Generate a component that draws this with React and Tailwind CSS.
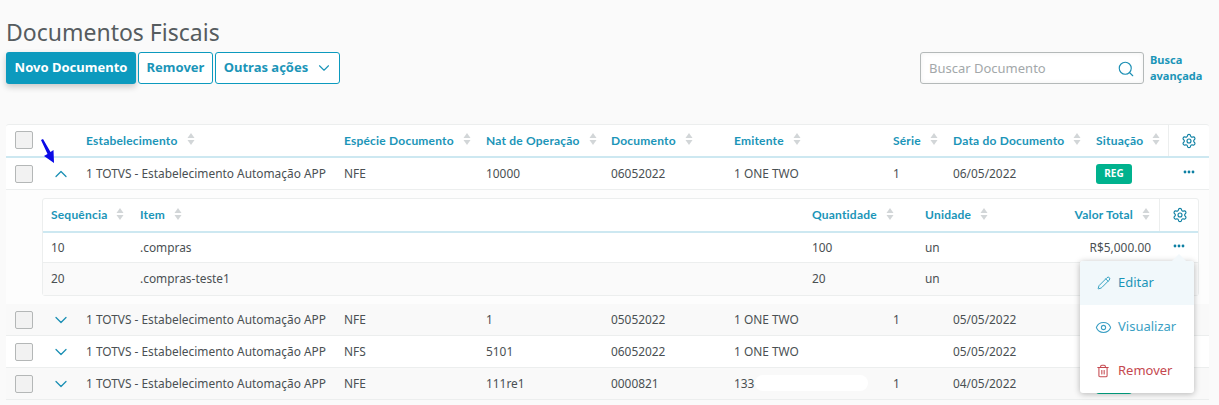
import { ChevronDown, ChevronUp, Eye, Pencil, Search, Settings, Trash2 } from 'lucide-react';

const COLS = 'grid grid-cols-[80px_258px_142px_125px_123px_159px_60px_143px_72px_41px] items-center';
const SUB_COLS = 'grid grid-cols-[88px_672px_113px_100px_143px_40px] items-center';

const ROWS = [
  { esp: 'NFE', nat: '1', doc: '05052022', emi: '1 ONE TWO', serie: '1', data: '05/05/2022', bg: 'bg-[#f9f9f9]' },
  { esp: 'NFS', nat: '5101', doc: '06052022', emi: '1 ONE TWO', serie: '', data: '05/05/2022', bg: 'bg-white' },
  { esp: 'NFE', nat: '111re1', doc: '0000821', emi: '133', serie: '1', data: '04/05/2022', bg: 'bg-[#f9f9f9]', blur: true },
];

function Sort() {
  return (
    <svg width="8" height="12" viewBox="0 0 8 12" className="mb-[3px] shrink-0 fill-[#d2d6d8]">
      <path d="M4 0 7.5 5H.5z" />
      <path d="M4 12 .5 7h7z" />
    </svg>
  );
}

function Head({ children, className = '' }) {
  return (
    <div className={`flex items-center gap-[9px] font-['Lato',sans-serif] text-[12px] font-bold tracking-[0.2px] text-[#1b95b8] ${className}`}>
      <span>{children}</span>
      <Sort />
    </div>
  );
}

function Check() {
  return <div className="h-[18px] w-[18px] rounded-[2px] border-[1.5px] border-[#b4b7b7] bg-[#f2f2f2]" />;
}

function Dots() {
  return (
    <svg width="12" height="4" viewBox="0 0 12 4" className="fill-[#0c7fa3]">
      <circle cx="2" cy="2" r="1.4" />
      <circle cx="6" cy="2" r="1.4" />
      <circle cx="10" cy="2" r="1.4" />
    </svg>
  );
}

function Badge({ children }) {
  return <span className="flex h-[20px] w-[36px] items-center justify-center rounded-[3px] bg-[#00b28e] text-[10px] font-bold text-white">{children}</span>;
}

function RowStart({ open }) {
  return (
    <div className="flex items-center pl-[9px]">
      <Check />
      <span className="ml-[18px] text-[#1b8fb4]">
        {open ? <ChevronUp size={20} strokeWidth={1.5} /> : <ChevronDown size={20} strokeWidth={1.5} />}
      </span>
    </div>
  );
}

export default function App() {
  return (
    <div className="relative h-[405px] w-[1219px] overflow-hidden bg-[#fafafa] font-['Noto_Sans',sans-serif] text-[11.9px] text-[#4a5053]">
      <div className="px-[6px] pt-[15px]">
        <h1 className="h-[37px] text-[23px] leading-[34px] text-[#565c5f]">Documentos Fiscais</h1>

        <div className="flex items-start">
          <button className="h-[32px] w-[130px] rounded-[3px] bg-[#0c9abe] text-[13px] font-bold text-white shadow-[0_3px_6px_rgba(0,0,0,0.2)]">Novo Documento</button>
          <button className="ml-[2px] h-[32px] w-[75px] rounded-[3px] border border-[#0c9abe] bg-white text-[13px] font-bold text-[#1b95b8]">Remover</button>
          <button className="ml-[2px] flex h-[32px] w-[125px] items-center justify-center gap-[7px] rounded-[3px] border border-[#0c9abe] bg-white pl-[2px] text-[13px] font-bold text-[#1b95b8]">
            Outras ações <ChevronDown size={18} strokeWidth={1.5} />
          </button>
          <div className="ml-[580px] flex h-[32px] w-[224px] items-center justify-between rounded-[3px] border border-[#b4b9b9] bg-white pl-[8px] pr-[8px] pt-[1px] text-[13px] text-[#a3a8aa] shadow-[inset_0_0_5px_rgba(0,0,0,0.06)]">
            Buscar Documento
            <Search size={18} strokeWidth={1.5} className="text-[#1b8fb4]" />
          </div>
          <div className="ml-[6px] text-[11px] font-bold leading-[16px] text-[#1b95b8]">Busca<br />avançada</div>
        </div>

        <div className="mt-[40px] w-[1203px] rounded-t-[3px] border-t border-[#eceeee] bg-white">
          <div className={`${COLS} h-[33px] border-b-2 border-[#cde8f1]`}>
            <div className="pb-[2px] pl-[9px]"><Check /></div>
            <Head>Estabelecimento</Head>
            <Head>Espécie Documento</Head>
            <Head>Nat de Operação</Head>
            <Head>Documento</Head>
            <Head>Emitente</Head>
            <Head>Série</Head>
            <Head>Data do Documento</Head>
            <Head>Situação</Head>
            <div className="flex h-full items-center justify-center border-l border-[#eceeee] text-[#0c7fa3]"><Settings size={16} strokeWidth={1.7} /></div>
          </div>

          <div className={`${COLS} h-[32px] border-b border-[#eceeee]`}>
            <RowStart open />
            <div>1 TOTVS - Estabelecimento Automação APP</div>
            <div>NFE</div>
            <div>10000</div>
            <div>06052022</div>
            <div>1 ONE TWO</div>
            <div>1</div>
            <div>06/05/2022</div>
            <div><Badge>REG</Badge></div>
            <div className="flex justify-center pb-[4px]"><Dots /></div>
          </div>

          <div className="h-[114px] bg-[#fdfdfd] pl-[36px] pt-[8px]">
            <div className="w-[1157px] rounded-[3px] border border-[#eceeee] bg-white">
              <div className={`${SUB_COLS} h-[34px] border-b-2 border-[#cde8f1]`}>
                <Head className="pl-[8px]">Sequência</Head>
                <Head className="pl-[9px]">Item</Head>
                <Head className="pl-[9px]">Quantidade</Head>
                <Head className="pl-[9px]">Unidade</Head>
                <Head className="justify-end pr-[9px]">Valor Total</Head>
                <div className="flex h-full items-center justify-center border-l border-[#eceeee] text-[#0c7fa3]"><Settings size={16} strokeWidth={1.7} /></div>
              </div>
              <div className={`${SUB_COLS} h-[30px] border-b border-[#eceeee]`}>
                <div className="pl-[8px]">10</div>
                <div className="pl-[9px]">.compras</div>
                <div className="pl-[9px]">100</div>
                <div className="pl-[9px]">un</div>
                <div className="pr-[8px] text-right">R$5,000.00</div>
                <div className="flex justify-center pb-[4px]"><Dots /></div>
              </div>
              <div className={`${SUB_COLS} h-[32px] bg-[#fafafa]`}>
                <div className="pl-[8px]">20</div>
                <div className="pl-[9px]">.compras-teste1</div>
                <div className="pl-[9px]">20</div>
                <div className="pl-[9px]">un</div>
              </div>
            </div>
          </div>

          {ROWS.map((r, i) => (
            <div key={i} className={`${COLS} h-[32px] border-b border-[#eceeee] ${r.bg}`}>
              <RowStart />
              <div>1 TOTVS - Estabelecimento Automação APP</div>
              <div>{r.esp}</div>
              <div>{r.nat}</div>
              <div>{r.doc}</div>
              <div className="relative">
                {r.emi}
                {r.blur && <span className="absolute left-[21px] top-0 h-[16px] w-[113px] rounded-full bg-white" />}
              </div>
              <div>{r.serie}</div>
              <div>{r.data}</div>
              <div>{r.blur && <Badge />}</div>
              <div />
            </div>
          ))}
        </div>
      </div>

      {/* seta de anotacao */}
      <svg width="20" height="30" viewBox="0 0 20 30" className="absolute left-[38px] top-[138px] fill-[#0a0ae6]">
        <path d="M3 2 5 1 12.5 14 15.5 12 16 25 6 18 9.5 16z" />
      </svg>

      {/* menu de acoes */}
      <div className="absolute left-[1080px] top-[261px] w-[114px] rounded-[3px] bg-white text-[13px] shadow-[0_1px_6px_rgba(0,0,0,0.28)]">
        <span className="absolute left-[94px] top-[-5px] h-[10px] w-[10px] rotate-45 bg-[#f2f8fb]" />
        <div className="relative flex h-[44px] items-center gap-[7px] rounded-t-[3px] bg-[#f1f8fb] pl-[17px] text-[#1b95b8]"><Pencil size={14} strokeWidth={1.5} /> Editar</div>
        <div className="flex h-[44px] items-center gap-[6px] pl-[15px] text-[#3a9fc4]"><Eye size={17} strokeWidth={1.5} /> Visualizar</div>
        <div className="flex h-[44px] items-center gap-[8px] pl-[16px] text-[#c5484f]"><Trash2 size={14} strokeWidth={1.8} /> Remover</div>
      </div>
    </div>
  );
}
